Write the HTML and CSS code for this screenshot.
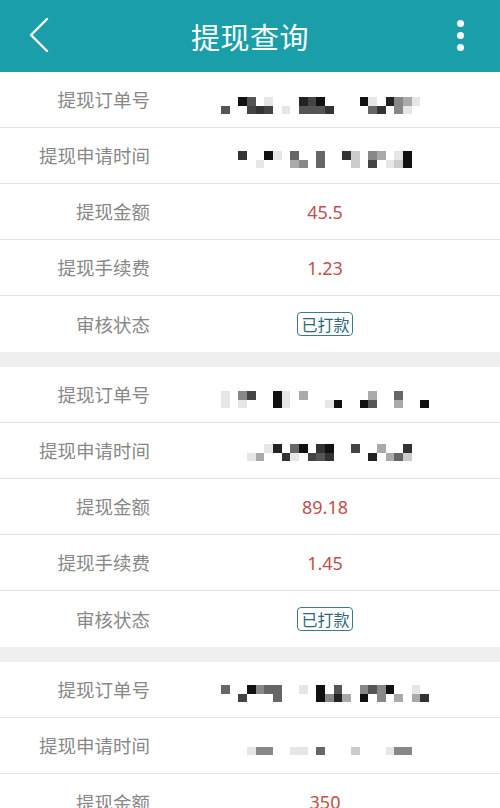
FILE: index.html
```html
<!DOCTYPE html>
<html lang="zh-CN">
<head>
<meta charset="utf-8">
<title>提现查询</title>
<link rel="stylesheet" href="styles.css">
</head>
<body>
<header class="topbar">
  <div class="topbar-left">
    <svg class="back" width="24" height="38" viewBox="0 0 24 38"><polyline points="19,2 3,18 19,34" fill="none" stroke="#fff" stroke-width="2.4" stroke-linecap="round" stroke-linejoin="round"/></svg>
  </div>
  <h1 class="title">提现查询</h1>
  <div class="topbar-right">
    <div class="dots"><span></span><span></span><span></span></div>
  </div>
</header>

<main class="list">
  <section class="group">
    <div class="row"><div class="label">提现订单号</div><div class="value">
      <div class="mosaic off12">
        <i></i><i></i><i class="k0"></i><i class="k4"></i><i></i><i class="k9"></i><i></i><i></i><i></i><i class="k1"></i><i class="k3"></i><i class="k0"></i><i></i><i></i><i></i><i></i><i class="k0"></i><i class="k9"></i><i></i><i class="k1"></i><i class="k6"></i><i class="k7"></i><i class="k9"></i><i></i>
        <i class="k4"></i><i></i><i></i><i class="k3"></i><i class="k2"></i><i class="k3"></i><i></i><i class="k9"></i><i></i><i class="k4"></i><i class="k4"></i><i class="k4"></i><i class="k2"></i><i></i><i></i><i></i><i></i><i class="k5"></i><i class="k2"></i><i></i><i class="k6"></i><i class="k9"></i><i></i><i></i>
      </div>
    </div></div>
    <div class="row"><div class="label">提现申请时间</div><div class="value">
      <div class="mosaic off8">
        <i></i><i></i><i class="k2"></i><i></i><i></i><i class="k0"></i><i class="k9"></i><i></i><i class="k5"></i><i></i><i></i><i class="k5"></i><i></i><i></i><i class="k2"></i><i class="k8"></i><i></i><i class="k6"></i><i class="k7"></i><i></i><i class="k9"></i><i class="k0"></i><i></i><i></i>
        <i></i><i></i><i></i><i></i><i class="k9"></i><i></i><i></i><i></i><i class="k7"></i><i class="k6"></i><i></i><i class="k5"></i><i></i><i></i><i></i><i class="k8"></i><i></i><i class="k3"></i><i></i><i class="k9"></i><i class="k8"></i><i class="k0"></i><i></i><i></i>
      </div>
    </div></div>
    <div class="row"><div class="label">提现金额</div><div class="value"><span class="money">45.5</span></div></div>
    <div class="row"><div class="label">提现手续费</div><div class="value"><span class="money">1.23</span></div></div>
    <div class="row"><div class="label">审核状态</div><div class="value"><span class="badge">已打款</span></div></div>
  </section>

  <section class="group">
    <div class="row"><div class="label">提现订单号</div><div class="value">
      <div class="mosaic off10">
        <i class="k9"></i><i></i><i class="k6"></i><i class="k3"></i><i></i><i></i><i class="k0"></i><i class="k9"></i><i></i><i class="k7"></i><i></i><i></i><i></i><i></i><i></i><i></i><i></i><i class="k7"></i><i></i><i></i><i class="k5"></i><i></i><i></i><i></i>
        <i class="k9"></i><i></i><i class="k9"></i><i></i><i></i><i></i><i class="k0"></i><i class="k9"></i><i></i><i></i><i></i><i></i><i class="k9"></i><i class="k0"></i><i></i><i></i><i class="k0"></i><i class="k4"></i><i></i><i></i><i class="k7"></i><i></i><i></i><i class="k0"></i>
      </div>
    </div></div>
    <div class="row"><div class="label">提现申请时间</div><div class="value">
      <div class="mosaic off4">
        <i></i><i></i><i></i><i></i><i></i><i class="k9"></i><i class="k1"></i><i></i><i class="k5"></i><i class="k0"></i><i></i><i class="k2"></i><i class="k0"></i><i></i><i></i><i class="k3"></i><i></i><i></i><i class="k7"></i><i></i><i></i><i class="k2"></i><i></i><i></i>
        <i></i><i></i><i></i><i class="k9"></i><i class="k7"></i><i></i><i></i><i class="k2"></i><i class="k9"></i><i></i><i class="k3"></i><i class="k4"></i><i class="k2"></i><i></i><i></i><i></i><i></i><i class="k1"></i><i></i><i class="k7"></i><i class="k5"></i><i class="k8"></i><i></i><i></i>
      </div>
    </div></div>
    <div class="row"><div class="label">提现金额</div><div class="value"><span class="money">89.18</span></div></div>
    <div class="row"><div class="label">提现手续费</div><div class="value"><span class="money">1.45</span></div></div>
    <div class="row"><div class="label">审核状态</div><div class="value"><span class="badge">已打款</span></div></div>
  </section>

  <section class="group">
    <div class="row"><div class="label">提现订单号</div><div class="value">
      <div class="mosaic off8">
        <i class="k5"></i><i></i><i></i><i class="k0"></i><i class="k6"></i><i class="k5"></i><i class="k5"></i><i></i><i></i><i class="k9"></i><i></i><i class="k0"></i><i></i><i class="k4"></i><i></i><i></i><i class="k6"></i><i class="k4"></i><i class="k6"></i><i class="k0"></i><i></i><i></i><i class="k9"></i><i></i>
        <i></i><i></i><i class="k3"></i><i></i><i></i><i></i><i class="k5"></i><i></i><i></i><i></i><i></i><i class="k0"></i><i class="k6"></i><i class="k1"></i><i class="k7"></i><i></i><i class="k0"></i><i></i><i class="k6"></i><i></i><i class="k7"></i><i></i><i class="k7"></i><i class="k2"></i>
      </div>
    </div></div>
    <div class="row"><div class="label">提现申请时间</div><div class="value">
      <div class="mosaic off2">
        <i></i><i></i><i></i><i></i><i></i><i></i><i></i><i></i><i></i><i></i><i></i><i></i><i></i><i></i><i></i><i></i><i></i><i></i><i></i><i></i><i></i><i></i><i></i><i></i>
        <i></i><i></i><i></i><i class="k9"></i><i class="k6"></i><i class="k6"></i><i></i><i></i><i class="k9"></i><i class="k9"></i><i></i><i class="k5"></i><i></i><i></i><i></i><i class="k8"></i><i></i><i></i><i></i><i class="k9"></i><i class="k6"></i><i class="k6"></i><i></i><i></i>
      </div>
    </div></div>
    <div class="row"><div class="label">提现金额</div><div class="value"><span class="money">350</span></div></div>
  </section>
</main>
</body>
</html>
```

FILE: styles.css
```css
* {
  box-sizing: border-box;
}

html, body {
  margin: 0;
  padding: 0;
}

body {
  width: 500px;
  height: 808px;
  overflow: hidden;
  background: #efefef;
  font-family: "Noto Sans CJK SC", "Noto Sans", sans-serif;
}

.topbar {
  height: 72px;
  background: #1a9ea9;
  display: grid;
  grid-template-columns: 1fr auto 1fr;
  align-items: center;
}

.topbar-left {
  padding-left: 28px;
  display: flex;
  align-items: center;
}

.back {
  display: block;
  margin-top: -1px;
}

.title {
  margin: 0;
  font-size: 29px;
  font-weight: 400;
  color: #ffffff;
  line-height: 1;
  letter-spacing: 0.5px;
}

.topbar-right {
  display: flex;
  justify-content: flex-end;
  padding-right: 36px;
}

.dots {
  display: flex;
  flex-direction: column;
  gap: 4.6px;
  margin-top: -1px;
}

.dots span {
  display: block;
  width: 7px;
  height: 7px;
  border-radius: 50%;
  background: #ffffff;
}

.list {
  display: flex;
  flex-direction: column;
  gap: 15px;
}

.group {
  background: #ffffff;
}

.row {
  height: 56px;
  display: flex;
  align-items: center;
  border-bottom: 1.5px solid #e3e3e3;
}

.row:last-child {
  border-bottom: none;
}

.label {
  width: 150px;
  text-align: right;
  font-size: 18.5px;
  color: #888888;
  line-height: 1;
}

.value {
  flex: 1;
  display: flex;
  justify-content: center;
  align-items: center;
}

.money {
  font-family: "Noto Sans", "Noto Sans CJK SC", sans-serif;
  font-size: 18px;
  color: #c0504b;
  line-height: 1;
}

.badge {
  font-size: 16px;
  line-height: 1;
  color: #2c6877;
  border: 1.5px solid #3c7a89;
  border-radius: 4px;
  padding: 3px 2px 3px 3px;
}

.mosaic {
  display: grid;
  grid-template-columns: repeat(24, 8.67px);
  grid-auto-rows: 8.6px;
  filter: blur(0.6px);
}

.mosaic i {
  display: block;
}

.off2 { margin-top: 2px; }
.off4 { margin-top: 4px; }
.off8 { margin-top: 8px; }
.off10 { margin-top: 10px; }
.off12 { margin-top: 12px; }

.k0 { background: #111111; }
.k1 { background: #222222; }
.k2 { background: #333333; }
.k3 { background: #444444; }
.k4 { background: #555555; }
.k5 { background: #666666; }
.k6 { background: #888888; }
.k7 { background: #aaaaaa; }
.k8 { background: #cccccc; }
.k9 { background: #e6e6e6; }
```
